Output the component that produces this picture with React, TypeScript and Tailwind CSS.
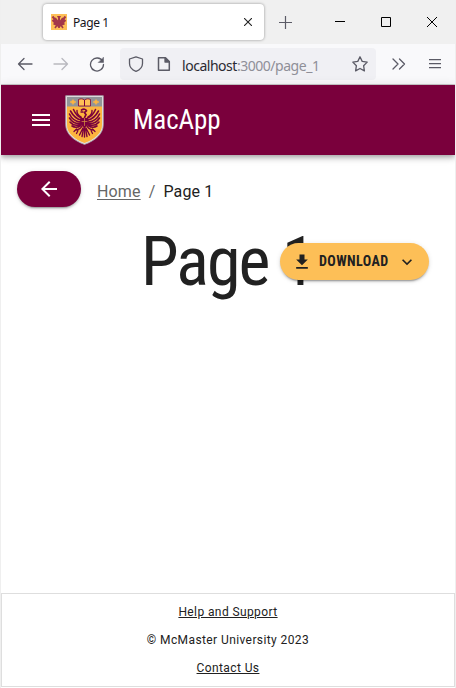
import type { ReactNode } from "react";

const EDGE_MARKS = [
  { top: 27, height: 6, color: "#55a6dc" },
  { top: 49, height: 3, color: "#5a1a28" },
  { top: 52, height: 5, color: "#1769a8" },
  { top: 72, height: 5, color: "#b39c9a" },
  { top: 115, height: 7, color: "#a9a3d2" },
  { top: 357, height: 8, color: "#5a452e" },
  { top: 402, height: 1, color: "#111111" },
  { top: 405, height: 1, color: "#111111" },
  { top: 421, height: 5, color: "#7a5a38" },
  { top: 426, height: 5, color: "#254d78" },
  { top: 445, height: 8, color: "#8078b8" },
  { top: 599, height: 2, color: "#2b4a80" },
  { top: 603, height: 3, color: "#79bfe6" },
  { top: 667, height: 1, color: "#333366" },
  { top: 669, height: 2, color: "#888888" },
];

function Wing() {
  return (
    <g>
      <path d="M16.500 23C13 22 10.500 19 8.500 14.500M16 25C11 24 8 20.500 5.500 16M15.500 27C10.500 26.500 6.500 23.500 4.500 19M15.500 28.500C11 29 7 27 4.500 23M15.500 29.500C11.500 31 8 30.500 5 27M16 30.500C13 32.500 10 33 7 31" strokeWidth="1.600" />
      <path d="M12 15.500c-.3 3 1 5 4 6.500" strokeWidth="1.400" />
      <path d="M17 31c-1 2.500-3 3.500-6 4M11.500 34l-2.500 2.500M13 35.500l-1.500 3" strokeWidth="1.300" />
      <path d="M18 33l-3.500 7M18.500 34l-1.500 7.500" strokeWidth="1.400" />
    </g>
  );
}

function Crest() {
  return (
    <svg className="ml-[15px] h-[50px] w-[39px] shrink-0" viewBox="0 0 39 50">
      <path d="M.7.7h37.600v29c0 9-8 16-18.800 19.700C8.700 45.700.7 38.700.7 29.700z" fill="#e6e3e5" stroke="#a4a0a5" strokeWidth=".8" />
      <path d="M2 2h35v28c0 8-7 14-17.500 18C9 44 2 38 2 30z" fill="#fdb53f" />
      <path d="M2 2h35v9.500H2z" fill="#929598" />
      <path d="M13.500 4.500c2-1 4-1 6 .5 2-1.500 4-1.500 6-.5v6.500h-12z" fill="#fdbf57" stroke="#7a003c" strokeWidth=".8" />
      <path d="M19.500 5v6" stroke="#7a003c" />
      <path d="M8 4.500l1 1.500 2 1-2 1-1 1.500L7 8 5 7l2-1zM31 4.500l1 1.500 2 1-2 1-1 1.500L30 8l-2-1 2-1z" fill="#fdb53f" stroke="#fdb53f" strokeWidth=".6" />
      <g fill="none" stroke="#7a003c" strokeLinecap="round">
        <Wing />
        <g transform="matrix(-1 0 0 1 39 0)"><Wing /></g>
        <path d="M16.500 15c2-1.300 4.500-1 5 .7l-2 2 1.500 2-1.500 3" strokeWidth="1.700" />
        <path d="M16 17h2M19.500 33v9" strokeWidth="1.400" />
        <path d="M16 23.500h7v5.500l-3.500 4-3.500-4z" fill="#7a003c" strokeWidth="1" />
        <path d="M19.500 23.500v7M17 26.500h5" stroke="#d9963f" strokeWidth=".7" />
      </g>
    </svg>
  );
}

function Favicon() {
  return (
    <svg className="ml-2 size-4 shrink-0" viewBox="0 0 16 16">
      <path d="M0 0h16v16H0z" fill="#fdbf57" />
      <g stroke="#a3374a" fill="none">
        <path d="M1.500 2.500 6 8M1.500 6l4 4M2.500 9.500l3 1M14.500 2.500 10 8M14.500 6l-4 4M13.500 9.500l-3 1M4 4l3 4M12 4 9 8" strokeWidth="2" />
        <path d="M8 2v12M6 11l-2 3M10 11l2 3" strokeWidth="1.600" />
      </g>
      <path d="M6 2h4L9 4v3h2v4l-3 3-3-3V7h2V4z" fill="#a3374a" />
    </svg>
  );
}

function Icon({ className, children }: { className: string; children: ReactNode }) {
  return (
    <svg className={"shrink-0 " + className} viewBox="0 0 16 16" fill="none" stroke="#5b5b66" strokeWidth="1.300" strokeLinecap="round" strokeLinejoin="round">
      {children}
    </svg>
  );
}

function TabBar() {
  return (
    <div className="flex h-11 shrink-0 bg-[#f0f0f0] pl-[42px]">
      <div className="mt-1 flex h-9 w-[221px] items-center rounded bg-white shadow-[0_0_3px_rgba(0,0,0,0.4)]">
        <Favicon />
        <span className="mt-0.5 ml-[6px] font-['Noto_Sans','Open_Sans',sans-serif] text-[12px] tracking-[-0.4px] text-[#15141a]">Page 1</span>
        <svg className="mr-3 ml-auto size-2" viewBox="0 0 8 8" stroke="#222" strokeWidth="1.100"><path d="M0 0l8 8M8 0 0 8" /></svg>
      </div>
      <svg className="mt-4 ml-[15px] size-[13px]" viewBox="0 0 13 13" stroke="#5b5b66" strokeWidth="1.200"><path d="M6.500 0v13M0 6.500h13" /></svg>
      <svg className="mt-4 ml-[43px] h-[12px] w-[10px]" viewBox="0 0 10 12" stroke="#000"><path d="M0 5.500h10" /></svg>
      <svg className="mt-[17px] ml-[36px] size-[10px]" viewBox="0 0 10 10" fill="none" stroke="#000"><path d="M.5.5h9v9h-9z" /></svg>
      <svg className="mt-[17px] ml-[36px] size-[10px]" viewBox="0 0 10 10" stroke="#000"><path d="M0 0l10 10M10 0 0 10" /></svg>
    </div>
  );
}

function Toolbar() {
  return (
    <div className="flex h-[41px] shrink-0 items-center border-b border-[#cccccc] bg-[#f9f9fb] pl-4">
      <Icon className="size-4"><path d="M15 8H1.500M7 2.500 1.500 8 7 13.500" /></Icon>
      <Icon className="ml-5 size-4 opacity-40"><path d="M1 8h13.500M9 2.500 14.500 8 9 13.500" /></Icon>
      <Icon className="ml-5 size-4"><path d="M13.600 5.200A6.500 6.500 0 1 0 14.500 8.500" /><path d="M14.500 1.500v5h-5z" fill="#5b5b66" strokeWidth=".5" /></Icon>
      <div className="ml-[15px] flex h-8 w-64 items-center rounded bg-[#f0f0f4]">
        <Icon className="ml-2 size-4"><path d="M8 .8 14.500 3v4.500c0 3.500-3 6.500-6.500 7.900C4.500 14 1.500 11 1.500 7.500V3z" /></Icon>
        <Icon className="ml-3 size-4"><path d="M2.500 1.800h7l3.800 3.800v8.700H2.500z" strokeWidth="1.500" /><path d="M9 2v4h4z" fill="#5b5b66" /></Icon>
        <span className="mt-0.5 ml-[10px] font-['Noto_Sans','Open_Sans',sans-serif] text-[14px] tracking-[-0.47px] whitespace-nowrap text-[#8f8f98]"><span className="text-[#2b2a31]">localhost</span>:3000/page_1</span>
        <Icon className="mr-2 ml-auto size-4"><path d="m8 .8 2.200 4.600 5 .7-3.600 3.600.8 5.200L8 12.500l-4.400 2.400.8-5.200L.8 6.100l5-.7z" /></Icon>
      </div>
      <Icon className="ml-[15px] size-4"><path d="m2 3 5 5-5 5M8.500 3l5 5-5 5" /></Icon>
      <svg className="ml-[22px] h-[10px] w-3 shrink-0" viewBox="0 0 12 10" fill="#5b5b66"><path d="M0 0h12v1.200H0zM0 4h12v1.200H0zM0 8h12v1.200H0z" /></svg>
    </div>
  );
}

export default function App() {
  return (
    <div className="relative flex h-[688px] w-[456px] flex-col overflow-hidden border-x border-[#efefef] bg-white font-[Roboto,sans-serif] text-[#212121]">
      <TabBar />
      <Toolbar />
      <header className="flex h-[70px] shrink-0 items-center bg-[#7a003c] pl-[31px] shadow-[0_2px_4px_-1px_rgba(0,0,0,0.2),0_4px_5px_rgba(0,0,0,0.14),0_1px_10px_rgba(0,0,0,0.12)]">
        <svg className="h-3 w-[18px]" viewBox="0 0 18 12" fill="#fff"><path d="M0 0h18v2H0zM0 5h18v2H0zM0 10h18v2H0z" /></svg>
        <Crest />
        <span className="ml-[29px] font-['Roboto_Condensed',Roboto,sans-serif] text-[27px] tracking-[-0.1px] [font-stretch:condensed] text-white">MacApp</span>
      </header>
      <main className="flex grow flex-col">
        <div className="flex items-center pt-4 pl-4">
          <button className="flex h-9 w-16 items-center justify-center rounded-full bg-[#7a003c] shadow-[0_3px_1px_-2px_rgba(0,0,0,0.2),0_2px_2px_rgba(0,0,0,0.14),0_1px_5px_rgba(0,0,0,0.12)]">
            <svg className="size-6" viewBox="0 0 24 24" fill="#fff"><path d="M20 11H7.830l5.590-5.590L12 4l-8 8 8 8 1.410-1.410L7.830 13H20v-2z" /></svg>
          </button>
          <nav className="mt-1.5 ml-4 flex text-[16px] leading-6 tracking-[0.15px] text-[#666666]">
            <a className="underline decoration-1 underline-offset-2">Home</a><span className="mx-2">/</span><span className="text-[#212121]">Page 1</span>
          </nav>
        </div>
        <div className="relative mt-[15px] flex h-20 pl-[140px]">
          <h1 className="font-['Roboto_Condensed',Roboto,sans-serif] text-[68px] leading-[80px] tracking-[-2px] [font-stretch:condensed] whitespace-nowrap">Page 1</h1>
          <button className="absolute top-[21px] right-[26px] flex h-[37px] w-[149px] items-center rounded-full bg-[#fdbf57] pl-3 shadow-[0_3px_1px_-2px_rgba(0,0,0,0.2),0_2px_2px_rgba(0,0,0,0.14),0_1px_5px_rgba(0,0,0,0.12)]">
            <svg className="size-5" viewBox="0 0 24 24" fill="#212121"><path d="M19 9h-4V3H9v6H5l7 7 7-7zM5 18v2h14v-2H5z" /></svg>
            <span className="ml-[7px] font-['Roboto_Condensed',Roboto,sans-serif] text-[14px] font-bold tracking-[0.4px] [font-stretch:condensed]">DOWNLOAD</span>
            <svg className="absolute right-3 size-5" viewBox="0 0 24 24" fill="#212121"><path d="M7.410 8.590 12 13.170l4.590-4.580L18 10l-6 6-6-6z" /></svg>
          </button>
        </div>
      </main>
      <footer className="mb-[1px] flex h-[94px] shrink-0 flex-col items-center border border-[#dedede] pt-1 text-[12px] leading-7 tracking-[0.4px]">
        <a className="underline underline-offset-1">Help and Support</a>
        <span>© McMaster University 2023</span>
        <a className="underline underline-offset-1">Contact Us</a>
      </footer>
      {EDGE_MARKS.map((m) => (
        <i key={m.top} className="absolute -right-px w-px" style={{ top: m.top, height: m.height, background: m.color }} />
      ))}
    </div>
  );
}
